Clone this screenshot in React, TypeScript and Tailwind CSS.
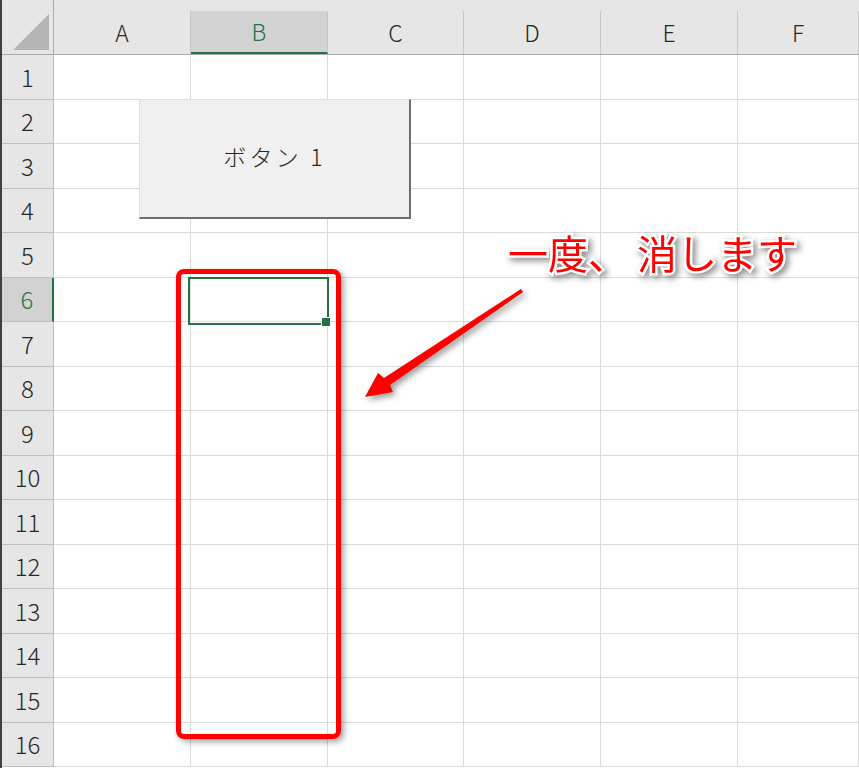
import React from "react";

const COLS = ["A", "B", "C", "D", "E", "F"];
const ROWS = Array.from({ length: 16 }, (_, i) => i + 1);

const font = { fontFamily: '"Noto Sans CJK JP", "Noto Sans", sans-serif' };

export default function App() {
  return (
    <div className="relative w-[859px] h-[768px] overflow-hidden bg-white flex" style={font}>
      {/* window edge */}
      <div className="w-[2px] h-full bg-[#404040] shrink-0" />

      <div className="grid grid-cols-[52px_137px_137px_136px_137px_137px_1fr] grid-rows-[55px_repeat(16,44.5px)] flex-1">
        {/* corner */}
        <div className="bg-[#e6e6e6] border-b border-r border-[#ababab] flex items-end justify-end pr-[3px] pb-[3px]">
          <svg width="37" height="37" viewBox="0 0 37 37">
            <polygon points="0,36 36,36 36,0" fill="#b5b5b5" />
          </svg>
        </div>

        {COLS.map((c) => {
          const sel = c === "B";
          return (
            <div key={c} className="bg-[#e6e6e6] border-b border-[#ababab] flex flex-col pt-[11px]">
              <div
                className={
                  sel
                    ? "flex-1 flex items-center justify-center bg-[#d2d2d2] border-r border-[#c6c6c6] border-b-2 border-b-[#217346] text-[#217346] text-[23px] font-light"
                    : "flex-1 flex items-center justify-center border-r border-[#c6c6c6] text-[#262626] text-[23px] font-light"
                }
              >
                {c}
              </div>
            </div>
          );
        })}

        {ROWS.map((r) => (
          <React.Fragment key={r}>
            <div
              className={
                r === 6
                  ? "bg-[#d2d2d2] border-b border-[#bdbdbd] border-r-2 border-r-[#217346] flex items-center justify-center text-[#217346] text-[24px] font-light"
                  : "bg-[#e6e6e6] border-b border-r border-[#bdbdbd] flex items-center justify-center text-[#262626] text-[24px] font-light"
              }
            >
              {r}
            </div>
            {COLS.map((c) => (
              <div key={c} className="border-b border-r border-[#dadada]" />
            ))}
          </React.Fragment>
        ))}
      </div>

      {/* form button */}
      <div className="absolute left-[139px] top-[99px] w-[272px] h-[120px] bg-[#f0f0f0] border-l border-t border-[#e0e0e0] border-r-2 border-b-2 border-r-[#6e6e6e] border-b-[#6e6e6e] flex items-center justify-center">
        <span className="text-[23px] font-light text-[#262626] tracking-[0.14em] -mt-[4px]">ボタン 1</span>
      </div>

      {/* active cell */}
      <div className="absolute left-[188px] top-[277px] w-[141px] h-[48px] border-2 border-[#217346]" />
      <div className="absolute left-[322px] top-[318px] w-[8px] h-[8px] bg-[#217346] outline outline-1 outline-white" />

      {/* red frame */}
      <div className="absolute left-[176px] top-[269px] w-[165px] h-[470px] border-[5px] border-[#ff0000] rounded-[8px] shadow-[3px_3px_6px_rgba(0,0,0,0.35)]" />

      {/* callout text */}
      <div
        className="absolute left-[508px] top-[232px] text-[40px] font-normal leading-none text-[#ff0000] whitespace-nowrap [paint-order:stroke_fill] [-webkit-text-stroke:5px_white] [filter:drop-shadow(3px_3px_3px_rgba(0,0,0,0.45))]"
      >
        一度、&nbsp;消します
      </div>

      {/* arrow */}
      <svg className="absolute left-0 top-0 pointer-events-none [filter:drop-shadow(3px_3px_3px_rgba(0,0,0,0.4))]" width="859" height="768">
        <polygon points="521,289 523,292 390,385 393,392 365,397 378,373 384,378" fill="#ff0000" />
      </svg>
    </div>
  );
}
